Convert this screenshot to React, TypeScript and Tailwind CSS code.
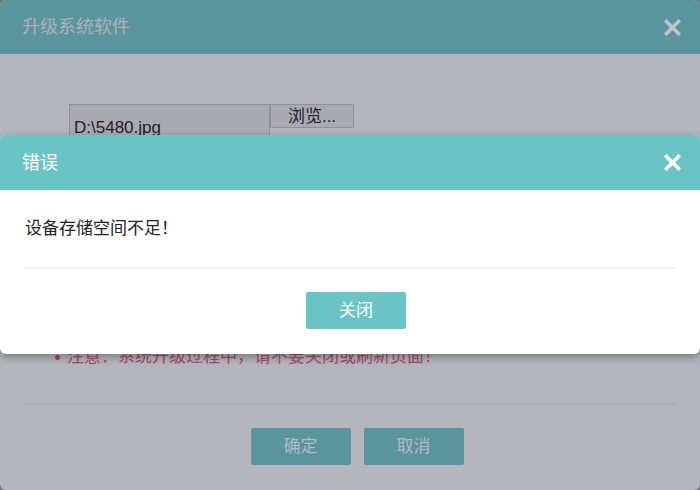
import React from 'react';

const cjk = '[font-family:"Liberation_Sans","Noto_Sans_CJK_SC",sans-serif]';

const CloseIcon = ({ className }: { className: string }) => (
  <svg viewBox="0 0 17 17" className={className} fill="none">
    <path d="M2.5 2.5 L14.5 14.5 M14.5 2.5 L2.5 14.5" stroke="currentColor" strokeWidth="3.6" strokeLinecap="square" />
  </svg>
);

const App = () => {
  return (
    <div className={`relative w-[700px] h-[490px] overflow-hidden bg-[#74747c] ${cjk}`}>
      {/* Upgrade dialog (behind the mask) */}
      <div className="w-[700px] h-[490px] rounded-[6px] overflow-hidden bg-[#b5b5be] flex flex-col">
        <div className="h-[54px] shrink-0 bg-[#5a949c] flex items-center justify-between pl-[22px] pr-[19px]">
          <span className="text-[18px] leading-none text-[#aeb3bb]">升级系统软件</span>
          <CloseIcon className="w-[17px] h-[17px] text-[#c0c4cc]" />
        </div>

        <div className="flex mt-[50px] ml-[69px]">
          <div className="w-[201px] h-[34px] bg-[#a9a9b1] border border-[#8f8f97] pl-[4px] pt-[14px] text-[17px] leading-none text-[#1e1e22] [font-family:'Liberation_Sans',sans-serif]">
            D:\5480.jpg
          </div>
          <div className="w-[84px] h-[24px] bg-[#a9a9b1] border border-[#8f8f97] flex items-center justify-center pt-[1px] text-[17px] leading-none text-[#1e1e22]">
            浏览...
          </div>
        </div>

        <ul className="mt-[207px] ml-[55px] text-[17px] leading-[24px] text-[#a54b62]">
          <li className="flex items-center gap-[7px]">
            <span className="w-[5px] h-[5px] rounded-full bg-[#a54b62]" />
            <span>注意：系统升级过程中，请不要关闭或刷新页面！</span>
          </li>
        </ul>

        <div className="mt-[34px] mx-[25px] h-[2px] bg-[#adadb6]" />

        <div className="mt-[23px] flex justify-center gap-[13px] pl-[14px]">
          <button className="w-[100px] h-[37px] rounded-[2px] bg-[#5a949c] text-[17px] text-[#b1bcc4]">确定</button>
          <button className="w-[100px] h-[37px] rounded-[2px] bg-[#5a949c] text-[17px] text-[#b1bcc4]">取消</button>
        </div>
      </div>

      {/* Error dialog */}
      <div className="absolute top-[135px] left-0 w-[700px] rounded-[6px] overflow-hidden bg-white shadow-[0_3px_8px_rgba(0,0,0,0.35)]">
        <div className="h-[55px] bg-[#6ac4c5] flex items-center justify-between pl-[22px] pr-[19px]">
          <span className="text-[18px] leading-none text-white">错误</span>
          <CloseIcon className="w-[17px] h-[17px] text-white" />
        </div>
        <div className="px-[25px]">
          <p className="pt-[27px] text-[17px] leading-[24px] text-[#222]">设备存储空间不足！</p>
          <div className="mt-[26px] h-[2px] bg-[#f0f0f0]" />
          <div className="flex justify-center pt-[23px] pb-[25px] pl-[12px]">
            <button className="w-[100px] h-[37px] rounded-[2px] bg-[#6ac4c5] text-[17px] text-white">关闭</button>
          </div>
        </div>
      </div>
    </div>
  );
};

export default App;
